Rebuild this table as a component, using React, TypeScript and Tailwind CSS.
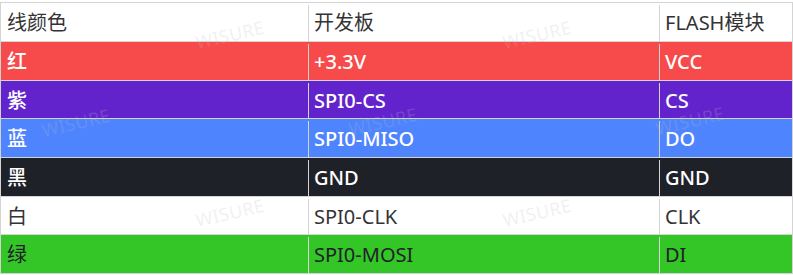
const rows = [
  { c: ["线颜色", "开发板", "FLASH模块"], bg: "bg-white", fg: "text-[#333333]", h: "h-[39px]" },
  { c: ["红", "+3.3V", "VCC"], bg: "bg-[#f74a4a]", fg: "text-white font-medium", h: "h-[39px]" },
  { c: ["紫", "SPI0-CS", "CS"], bg: "bg-[#6323cc]", fg: "text-white font-medium", h: "h-[38px]" },
  { c: ["蓝", "SPI0-MISO", "DO"], bg: "bg-[#4f84ff]", fg: "text-white font-medium", h: "h-[39px]" },
  { c: ["黑", "GND", "GND"], bg: "bg-[#1f2129]", fg: "text-white font-medium", h: "h-[39px]" },
  { c: ["白", "SPI0-CLK", "CLK"], bg: "bg-white", fg: "text-[#333333]", h: "h-[38px]" },
  { c: ["绿", "SPI0-MOSI", "DI"], bg: "bg-[#33c626]", fg: "text-[#1f2129]", h: "h-[39px]" },
];

const marks = [
  [230, 35], [537, 35],
  [76, 123], [383, 122], [690, 121],
  [230, 213], [537, 213],
];

export default function App() {
  return (
    <div className="relative w-[793px] h-[275px] bg-white pt-[2px] overflow-hidden font-['Noto_Sans','Noto_Sans_CJK_SC',sans-serif] text-[20px]">
      <div className="border-l border-r border-t border-[#d4d4d4]">
        {rows.map((r, i) => (
          <div key={i} className={`flex border-b border-[#d4d4d4] pt-[2px] ${r.h} ${r.bg} ${r.fg}`}>
            <div className="w-[308px] border-r border-[#d4d4d4] flex items-center pl-[6px]">{r.c[0]}</div>
            <div className="w-[351px] border-r border-[#d4d4d4] flex items-center pl-[5px]">{r.c[1]}</div>
            <div className="flex-1 flex items-center pl-[5px]">{r.c[2]}</div>
          </div>
        ))}
      </div>
      {marks.map(([x, y], i) => (
        <div
          key={i}
          aria-hidden="true"
          className="absolute pointer-events-none -translate-x-1/2 -translate-y-1/2 -rotate-[13deg] text-[18px] tracking-wide text-[rgba(190,190,190,0.22)] font-['Noto_Sans',sans-serif]"
          style={{ left: x, top: y }}
        >
          WISURE
        </div>
      ))}
    </div>
  );
}
